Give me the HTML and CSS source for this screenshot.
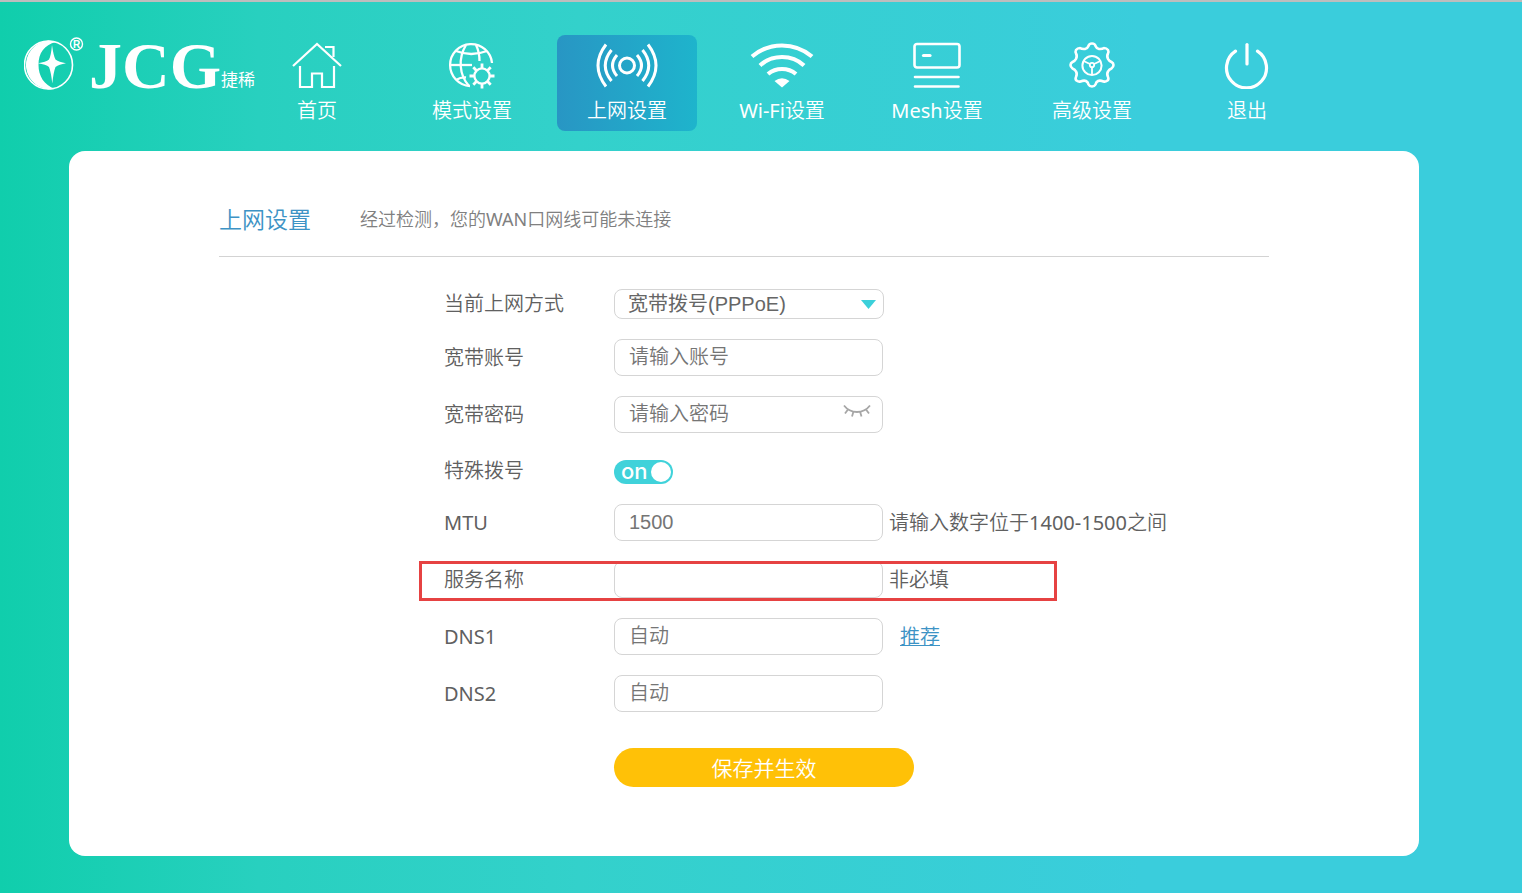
FILE: index.html
```html
<!DOCTYPE html>
<html lang="zh-CN">
<head>
<meta charset="utf-8">
<title>上网设置</title>
<link rel="stylesheet" href="styles.css">
</head>
<body>
<header class="header">
  <a class="logo" href="#" aria-label="JCG">
    <svg class="logo-mark" viewBox="0 0 61 56" width="61" height="56" aria-hidden="true">
      <circle cx="24.500" cy="30" r="24" fill="none" stroke="#fff" stroke-width="1.6"/>
      <path fill="#fff" d="M24.500 5.500A24.500 24.500 0 1 0 31 54C20 50 14.500 41 14.500 30C14.500 18 20 10 32 7Q28 5.500 24.500 5.500Z"/>
      <path fill="#fff" d="M28 10Q29.500 21 31.500 24.500Q35 27 42 28.300Q35 29.500 31.500 32Q29.500 37 28.300 48.500Q27 37 25 32Q22 29.500 14 28.300Q22 27 25 24.500Q27 21 28 10Z"/>
      <circle cx="52.500" cy="9" r="6" fill="none" stroke="#fff" stroke-width="1.400"/>
      <text class="logo-reg" x="52.500" y="12.500" text-anchor="middle">R</text>
    </svg>
    <span class="logo-name">JCG</span><span class="logo-cn">捷稀</span>
  </a>
  <nav class="nav">
    <a class="nav-item" href="#">
      <svg viewBox="0 0 52 48" width="52" height="48" fill="none" stroke="#fff" stroke-width="2.200">
        <path d="M2 25L26 3L50 25"/><path d="M34 6H42.500V16"/><path d="M9 25V46H21V32.500H31V46H43V25"/>
      </svg>
      <span>首页</span>
    </a>
    <a class="nav-item" href="#">
      <svg viewBox="0 0 48 48" width="48" height="48" fill="none" stroke="#fff" stroke-width="2.300">
        <path d="M44 22A21 21 0 1 0 22 45"/><path d="M18 4C10 17 11 34 21 45"/><path d="M28 4C30 8 31.500 13 31.500 20"/><path d="M8 10Q23 16 39 10"/><path d="M2 24H24"/><path d="M8 39Q13 36 18 36.500"/>
        <circle cx="34" cy="35" r="7.600"/>
        <path stroke-width="2.800" d="M34 27V22.500M34 43V47.500M26 35H21.500M42 35H46.500M28.400 29.400L25.300 26.300M39.600 29.400L42.700 26.300M28.400 40.600L25.300 43.700M39.600 40.600L42.700 43.700"/>
      </svg>
      <span>模式设置</span>
    </a>
    <a class="nav-item nav-item-active" href="#" aria-current="page">
      <svg viewBox="0 0 64 48" width="64" height="48" fill="none" stroke="#fff" stroke-width="3">
        <circle cx="32" cy="24.500" r="7.500"/>
        <path d="M22 14Q13 24.500 22 35M16.500 9Q4 24.500 16.500 40M11 3.500Q-5 24.500 11 45.500"/>
        <path d="M42 14Q51 24.500 42 35M47.500 9Q60 24.500 47.500 40M53 3.500Q69 24.500 53 45.500"/>
      </svg>
      <span>上网设置</span>
    </a>
    <a class="nav-item" href="#">
      <svg viewBox="0 0 64 48" width="64" height="48" fill="none" stroke="#fff" stroke-width="4.200">
        <path d="M2 15.500Q15 4.500 32 4.500T62 15.500"/><path d="M10 24.500Q19 16 32 16T54 24.500"/><path d="M18 33Q24 28 32 28T46 33"/>
        <path fill="#fff" stroke="none" d="M24.500 40Q32 34.500 39.500 40L32 46.500Z"/>
      </svg>
      <span><span class="latin">Wi-Fi</span>设置</span>
    </a>
    <a class="nav-item" href="#">
      <svg viewBox="0 0 48 48" width="48" height="48" fill="none" stroke="#fff" stroke-width="2.600" stroke-linecap="round">
        <rect x="1.500" y="3" width="45" height="23.500" rx="2.500"/><path stroke-width="3.200" d="M10.500 14.500H17"/><path d="M2 36H45.500M2 45.500H45.500"/>
      </svg>
      <span><span class="latin">Mesh</span>设置</span>
    </a>
    <a class="nav-item" href="#">
      <svg viewBox="0 0 48 48" width="48" height="48" fill="none" stroke="#fff" stroke-width="2.600" stroke-linejoin="round">
        <path d="M20.500 5Q21 2.500 24 2.500T27.500 5Q28.500 7.500 31 8Q34.500 8.200 36 7Q38.500 7 40 9Q41 11 40 12.500Q38.500 15 40 18Q41 20 43.500 21Q45.500 22 45.500 24T43.500 27.500Q41 28.500 40 30.500Q38.500 33 40 36Q41 38 39.500 39.500Q37.500 41 35.500 40.500Q32 39 30 40Q28 41 27.500 43.500Q26.500 45.500 24 45.500T20.500 43.500Q20 41 18 40Q16 39 12.500 40.500Q10.500 41 8.500 39.500Q7 38 8 36Q9.500 33 8 30.500Q7 28.500 4.500 27.500Q2.500 26 2.500 24T4.500 21Q7 20 8 18Q9.500 15 8 12.500Q7 11 8 9Q9.500 7 12 7Q13.500 8.200 17 8Q19.500 7.500 20.500 5Z"/>
        <circle cx="24" cy="24.500" r="9.600" stroke-width="2"/><circle cx="24" cy="24" r="2.200" stroke-width="1.800"/>
        <path stroke-width="1.800" d="M22 23L15.500 20M26 23L32.500 20M24 26.500V34"/>
      </svg>
      <span>高级设置</span>
    </a>
    <a class="nav-item" href="#">
      <svg viewBox="0 0 48 48" width="48" height="48" fill="none" stroke="#fff" stroke-width="3.200" stroke-linecap="round">
        <path d="M24 3.500V23"/><path d="M12.500 10.200A20 20 0 1 0 34.500 10.200"/>
      </svg>
      <span>退出</span>
    </a>
  </nav>
</header>
<main class="card">
  <div class="card-head">
    <h1 class="card-title">上网设置</h1>
    <p class="card-note">经过检测，您的<span class="latin">WAN</span>口网线可能未连接</p>
  </div>
  <form class="form">
    <div class="row row-select">
      <label class="row-label" for="mode">当前上网方式</label>
      <select class="select" id="mode"><option>宽带拨号(PPPoE)</option></select>
    </div>
    <div class="row">
      <label class="row-label" for="account">宽带账号</label>
      <input class="field" id="account" type="text" placeholder="请输入账号">
    </div>
    <div class="row">
      <label class="row-label" for="password">宽带密码</label>
      <div class="password">
        <input class="field" id="password" type="password" placeholder="请输入密码">
        <button class="eye" type="button" aria-label="显示密码">
          <svg viewBox="0 0 28 14" width="28" height="14" fill="none" stroke="#a6a6a6" stroke-width="1.800">
            <path d="M1 1.500Q6 8 14 8T27 1.500"/><path d="M5 5.500L2 9.500M10.500 7.500L9 12.500M17 7.500L18.500 12.500M23 5.500L26 9.500"/>
          </svg>
        </button>
      </div>
    </div>
    <div class="row row-switch">
      <label class="row-label" for="special">特殊拨号</label>
      <span class="switch">
        <input class="switch-input" id="special" type="checkbox" role="switch" checked>
        <span class="switch-text" aria-hidden="true">on</span>
      </span>
    </div>
    <div class="row">
      <label class="row-label latin" for="mtu">MTU</label>
      <input class="field field-number" id="mtu" type="text" placeholder="1500">
      <span class="row-hint">请输入数字位于<span class="latin">1400-1500</span>之间</span>
    </div>
    <div class="row row-marked">
      <label class="row-label" for="service">服务名称</label>
      <input class="field" id="service" type="text">
      <span class="row-hint">非必填</span>
    </div>
    <div class="row">
      <label class="row-label latin" for="dns1">DNS1</label>
      <input class="field" id="dns1" type="text" placeholder="自动">
      <a class="row-link" href="#">推荐</a>
    </div>
    <div class="row">
      <label class="row-label latin" for="dns2">DNS2</label>
      <input class="field" id="dns2" type="text" placeholder="自动">
    </div>
    <button class="submit" type="submit">保存并生效</button>
  </form>
</main>
</body>
</html>
```
FILE: styles.css
```css
*,
*::before,
*::after {
  box-sizing: border-box;
}

body {
  margin: 0;
  min-height: 100vh;
  border-top: 2px solid #bdbdbd;
  background: linear-gradient(90deg, #10ceac 0%, #28d0bf 17%, #33d1cb 38%, #3acddc 75%, #3acddc 100%);
  color: #606060;
  font-family: "Noto Sans", "Noto Sans CJK SC", sans-serif;
  font-size: 20px;
  font-weight: 350;
  line-height: 28px;
}

.latin {
  font-weight: 400;
}

.header {
  display: flex;
  align-items: flex-start;
  padding: 33px 24px 20px;
}

.logo {
  display: flex;
  flex: none;
  align-items: flex-start;
  width: 223px;
  color: #fff;
  text-decoration: none;
  white-space: nowrap;
}

.logo-mark {
  flex: none;
  margin-right: 4px;
}

.logo-reg {
  fill: #fff;
  font: bold 10px "Liberation Sans", sans-serif;
}

.logo-name {
  font: bold 66px/62px "Liberation Serif", serif;
}

.logo-cn {
  padding-top: 35px;
  font-size: 17px;
  font-weight: 400;
  line-height: 20px;
}

.nav {
  display: flex;
  gap: 15px;
}

.nav-item {
  display: flex;
  flex-direction: column;
  align-items: center;
  gap: 8px;
  width: 140px;
  height: 96px;
  padding-top: 6px;
  border-radius: 8px;
  color: #fff;
  text-decoration: none;
  white-space: nowrap;
}

.nav-item-active {
  background: linear-gradient(90deg, #2896c4, #1eb4cc);
}

.card {
  margin: 0 103px 37px 69px;
  padding: 48px 150px 69px;
  border-radius: 16px;
  background: #fff;
}

.card-head {
  display: flex;
  align-items: center;
  gap: 49px;
  padding-bottom: 17px;
  border-bottom: 1px solid #d3d3d3;
}

.card-title {
  margin: 0;
  color: #3d93c5;
  font-size: 23px;
  font-weight: 350;
  line-height: 40px;
}

.card-note {
  margin: 0;
  color: #808080;
  font-size: 18px;
}

.form {
  display: flex;
  flex-direction: column;
  gap: 20px;
  padding: 32px 0 0 225px;
}

.row {
  position: relative;
  display: flex;
  align-items: center;
}

.row-label {
  flex: none;
  width: 170px;
}

.field,
.select {
  width: 269px;
  height: 37px;
  padding: 0 14px;
  border: 1px solid #d5d5d5;
  border-radius: 8px;
  background: #fff;
  color: #606060;
  font-family: "Liberation Sans", "Noto Sans CJK SC", sans-serif;
  font-size: 20px;
  font-weight: 350;
}

.field::placeholder {
  color: #757575;
  opacity: 1;
}

.field-number {
  font-weight: 400;
}

.select {
  width: 270px;
  height: 30px;
  padding: 0 13px;
  appearance: none;
  background: #fff url("data:image/svg+xml,%3Csvg xmlns='http://www.w3.org/2000/svg' width='15' height='9'%3E%3Cpath d='M0 0H15L7.500 9Z' fill='%233bd0da'/%3E%3C/svg%3E") no-repeat right 7px center;
  color: #666;
  font-weight: 400;
}

.row-select {
  height: 30px;
}

.row-switch {
  align-items: flex-end;
  height: 31px;
}

.row-switch .row-label {
  line-height: 26px;
}

.password {
  position: relative;
}

.eye {
  position: absolute;
  top: 8px;
  right: 12px;
  display: flex;
  padding: 0;
  border: 0;
  background: none;
}

.switch {
  position: relative;
  display: flex;
}

.switch-input {
  display: flex;
  align-items: center;
  justify-content: flex-end;
  width: 59px;
  height: 24px;
  margin: 0;
  padding: 2px;
  border-radius: 12px;
  appearance: none;
  background: #40d2da;
}

.switch-input::before {
  width: 20px;
  height: 20px;
  border-radius: 50%;
  background: #fff;
  content: "";
}

.switch-text {
  position: absolute;
  top: 0;
  left: 7px;
  color: #fff;
  font: 500 22px/22px Inter, sans-serif;
  pointer-events: none;
}

.row-hint {
  margin-left: 6px;
  white-space: nowrap;
}

.row-link {
  margin-left: 17px;
  color: #3d93c5;
  text-decoration-thickness: 1px;
}

.row-marked::after {
  position: absolute;
  top: 0;
  bottom: -3px;
  left: -25px;
  width: 638px;
  border: 3px solid #e64242;
  content: "";
  pointer-events: none;
}

.submit {
  width: 300px;
  height: 39px;
  margin: 16px 0 0 170px;
  padding: 0;
  border: 0;
  border-radius: 20px;
  background: #ffc107;
  color: #fff;
  font: inherit;
  font-size: 21px;
}
```
